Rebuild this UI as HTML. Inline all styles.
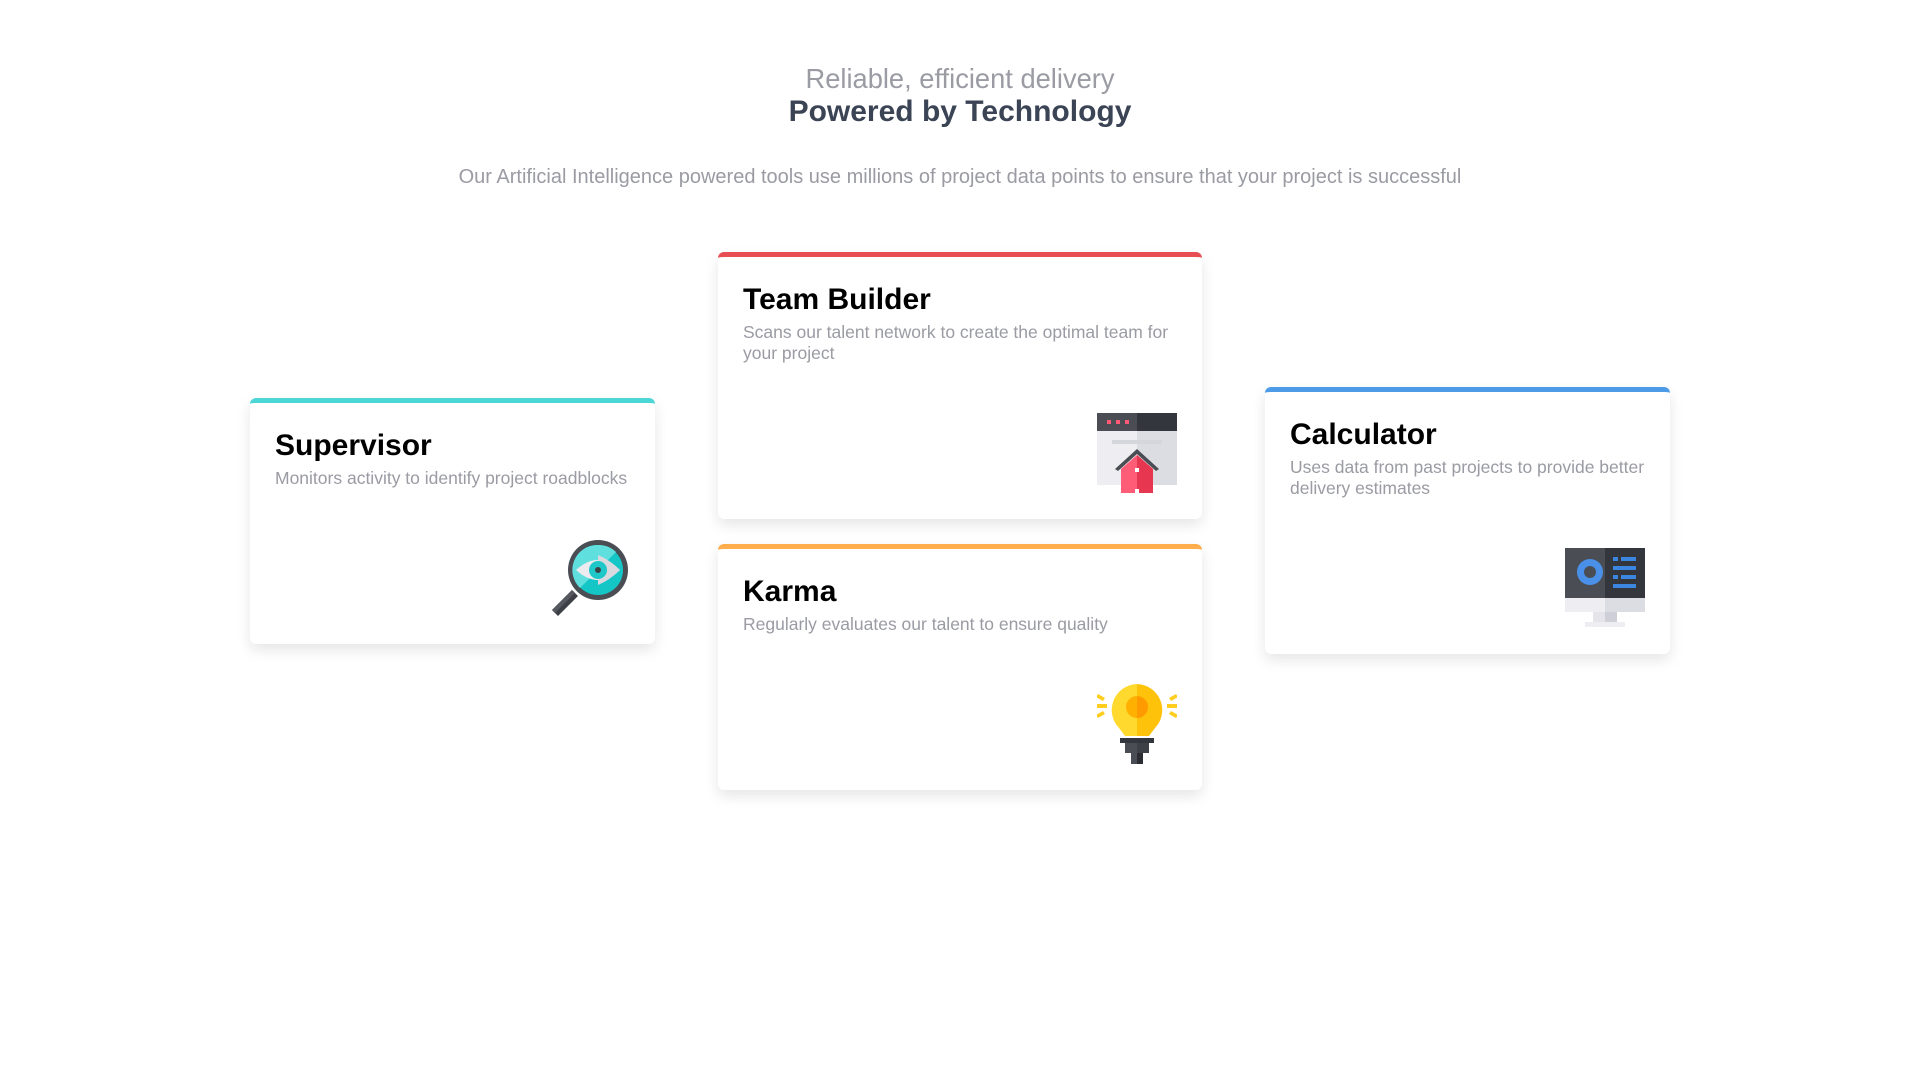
<!DOCTYPE html>
<html><head><meta charset="utf-8">
<style>
body{margin:0;width:1920px;height:1080px;background:#fff;font-family:"Liberation Sans",Arial,sans-serif;position:relative;overflow:hidden}
.h1{position:absolute;left:0;width:1920px;text-align:center;top:63px;font-size:27.3px;color:#9a9ba3}
.h2{position:absolute;left:0;width:1920px;text-align:center;top:95px;font-size:30px;font-weight:bold;color:#3b4455}
.p{position:absolute;left:0;width:1920px;text-align:center;top:166px;font-size:20px;color:#9a9ba3}
.card{position:absolute;background:#fff;border-radius:6px;box-shadow:0 6px 14px rgba(0,0,0,0.10);border-top:5px solid;box-sizing:border-box}
.card h3{margin:0;position:absolute;left:25px;top:26px;font-size:30px;font-weight:bold;color:#000}
.card .d{position:absolute;left:25px;top:65px;right:20px;font-size:17.5px;line-height:21px;color:#9a9ba3}
.card svg{position:absolute;right:25px;bottom:26px;width:80px;height:80px}
</style></head><body>
<div class="h1">Reliable, efficient delivery</div>
<div class="h2">Powered by Technology</div>
<div class="p">Our Artificial Intelligence powered tools use millions of project data points to ensure that your project is successful</div>

<div class="card" style="left:250px;top:398px;width:405px;height:246px;border-color:#4dd6d6">
<h3>Supervisor</h3><div class="d">Monitors activity to identify project roadblocks</div>
<svg viewBox="0 0 80 80"><path d="M22 52 L28 58 L8 78 L2 72 Z" fill="#3d4147"/><path d="M22 52 L25 55 L5 75 L2 72 Z" fill="#55595f"/><circle cx="48" cy="32" r="30" fill="#4a4e54"/><circle cx="48" cy="32" r="25" fill="#14c6c6"/><path d="M48 7 A25 25 0 0 0 30 50 L66 14 A25 25 0 0 0 48 7Z" fill="#5fe0de"/><path d="M26 32 Q48 12 70 32 Q48 52 26 32Z" fill="#ececf0"/><path d="M48 17 Q60 22 70 32 Q60 42 48 47Z" fill="#d9d9e0"/><circle cx="48" cy="32" r="9" fill="#1ec8c8"/><circle cx="48" cy="32" r="3" fill="#3d4147"/></svg>
</div>

<div class="card" style="left:718px;top:252px;width:484px;height:267px;border-color:#e84d53">
<h3>Team Builder</h3><div class="d">Scans our talent network to create the optimal team for your project</div>
<svg viewBox="0 0 80 80"><rect x="0" y="0" width="40" height="18" fill="#4a4e54"/><rect x="40" y="0" width="40" height="18" fill="#33373d"/><rect x="10" y="7" width="4" height="4" fill="#ff5a75"/><rect x="19" y="7" width="4" height="4" fill="#ff5a75"/><rect x="28" y="7" width="4" height="4" fill="#ff5a75"/><rect x="0" y="18" width="40" height="54" fill="#eeeef2"/><rect x="40" y="18" width="40" height="54" fill="#dcdce3"/><rect x="15" y="27" width="50" height="4" fill="#d5d5dc"/><path d="M24 56 L40 42 L56 56 V80 H24Z" fill="#ff5c78"/><path d="M40 42 L56 56 V80 H40Z" fill="#e63650"/><path d="M18 56 L40 36 L62 56 L59 58 L40 41 L21 58Z" fill="#4a4e54"/><rect x="38" y="55" width="4" height="4" fill="#fff"/><rect x="38" y="76" width="4" height="4" fill="#fff"/></svg>
</div>

<div class="card" style="left:718px;top:544px;width:484px;height:246px;border-color:#ffad4d">
<h3>Karma</h3><div class="d">Regularly evaluates our talent to ensure quality</div>
<svg viewBox="0 0 80 80"><g fill="#ffcd1e"><rect x="0" y="20" width="10" height="4"/><rect x="70" y="20" width="10" height="4"/><path d="M1 10 L8 14 L6 17 L-1 13Z"/><path d="M79 10 L72 14 L74 17 L81 13Z"/><path d="M1 34 L8 30 L6 27 L-1 31Z"/><path d="M79 34 L72 30 L74 27 L81 31Z"/></g><path d="M40 0 A26 26 0 0 0 22 44 L28 52 H40Z" fill="#ffd92e"/><path d="M40 0 A26 26 0 0 1 58 44 L52 52 H40Z" fill="#ffc20a"/><circle cx="40" cy="23" r="11" fill="#ffb000"/><path d="M40 12 A11 11 0 0 1 40 34Z" fill="#ff9b00"/><rect x="23" y="54" width="34" height="5" fill="#33373d"/><rect x="28" y="59" width="24" height="10" fill="#4a4e54"/><rect x="34" y="69" width="12" height="11" fill="#4a4e54"/><rect x="40" y="59" width="12" height="10" fill="#3d4147"/><rect x="40" y="69" width="6" height="11" fill="#2a2d31"/></svg>
</div>

<div class="card" style="left:1265px;top:387px;width:405px;height:267px;border-color:#4d9be8">
<h3>Calculator</h3><div class="d">Uses data from past projects to provide better delivery estimates</div>
<svg viewBox="0 0 80 80"><rect x="0" y="0" width="40" height="50" fill="#4a4e54"/><rect x="40" y="0" width="40" height="50" fill="#33373d"/><circle cx="25" cy="24" r="13" fill="#4a90e8"/><circle cx="25" cy="24" r="6" fill="#4a4e54"/><g fill="#3b86e0"><rect x="48" y="9" width="5" height="4"/><rect x="56" y="9" width="15" height="4"/><rect x="48" y="18" width="23" height="4"/><rect x="48" y="27" width="5" height="4"/><rect x="56" y="27" width="15" height="4"/><rect x="48" y="36" width="23" height="4"/></g><rect x="0" y="50" width="40" height="14" fill="#eeeef2"/><rect x="40" y="50" width="40" height="14" fill="#dcdce3"/><rect x="28" y="64" width="12" height="10" fill="#e4e4ea"/><rect x="40" y="64" width="12" height="10" fill="#cfcfd7"/><rect x="20" y="74" width="40" height="5" fill="#eeeef2"/></svg>
</div>
</body></html>
